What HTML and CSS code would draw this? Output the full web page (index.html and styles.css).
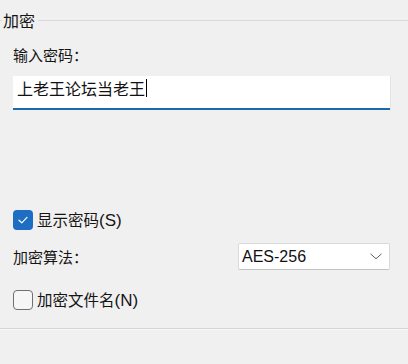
FILE: index.html
```html
<!DOCTYPE html>
<html lang="zh-CN">
<head>
    <meta charset="UTF-8">
    <title>加密</title>
    <link rel="stylesheet" href="styles.css">
</head>
<body>
    <div class="group-head"><span>加密</span></div>

    <div class="group-body">
        <div class="field-label">输入密码：</div>
        <div class="text-input">上老王论坛当老王<span class="caret"></span></div>

        <div class="check-row show-pass">
            <span class="checkbox checked">
                <svg width="20" height="20" viewBox="0 0 20 20">
                    <polyline points="6,10.2 8.8,12.8 14,7.4" fill="none" stroke="#fff" stroke-width="1.2" stroke-linecap="round" stroke-linejoin="round"/>
                </svg>
            </span>
            <span class="check-text">显示密码<span class="latin">(S)</span></span>
        </div>

        <div class="algo-row">
            <span>加密算法：</span>
            <div class="combo">
                <span class="combo-value">AES-256</span>
                <svg class="chevron" width="12" height="7" viewBox="0 0 12 7">
                    <polyline points="0.5,0.8 6,5.8 11.5,0.8" fill="none" stroke="#5c5c5c" stroke-width="1"/>
                </svg>
            </div>
        </div>

        <div class="check-row encrypt-name">
            <span class="checkbox"></span>
            <span class="check-text">加密文件名<span class="latin">(N)</span></span>
        </div>
    </div>

    <div class="bottom-line"></div>
</body>
</html>
```

FILE: styles.css
```css
body {
    margin: 0;
    background-color: #f0f0f0;
    font-family: "Noto Sans CJK SC", "Noto Sans", sans-serif;
    font-size: 15px;
    line-height: 20px;
    color: #151515;
}
.group-head {
    display: flex;
    align-items: center;
    padding-top: 10px;
    height: 20px;
}
.group-head::before,
.group-head::after {
    content: "";
    border-top: 1px solid #d9d9d9;
}
.group-head::before {
    width: 2px;
    margin-right: 1px;
}
.group-head::after {
    flex: 1;
    margin-left: 3px;
}
.group-head span {
    font-size: 16px;
}
.group-body {
    padding: 0 18px 0 13px;
}
.field-label {
    margin-top: 15px;
}
.text-input {
    margin-top: 11px;
    background: #fff;
    height: 20px;
    padding: 2px 4px 10px 4px;
    font-size: 16px;
    color: #111;
    border-bottom: 2px solid #1c68ad;
    box-shadow: 1px 0 0 #e4e4e4;
    display: flex;
    align-items: center;
}
.caret {
    display: inline-block;
    width: 1px;
    height: 18px;
    background: #000;
    margin-left: 1px;
}
.check-row {
    display: flex;
    align-items: center;
    height: 20px;
}
.check-text {
    font-size: 15.5px;
}
.show-pass {
    margin-top: 100px;
}
.encrypt-name {
    margin-top: 20px;
}
.checkbox {
    box-sizing: border-box;
    width: 20px;
    height: 20px;
    border: 1px solid #707070;
    border-radius: 4px;
    background: #f6f6f6;
    margin-right: 4px;
}
.checkbox.checked {
    border: none;
    background: #1d6ec3;
}
.checkbox svg {
    display: block;
}
.latin {
    font-family: "Liberation Sans", Arial, sans-serif;
    font-size: 17px;
}
.algo-row {
    margin-top: 13px;
    display: flex;
    align-items: center;
    justify-content: space-between;
    height: 27px;
}
.combo {
    box-sizing: border-box;
    width: 152px;
    height: 27px;
    background: #fff;
    border: 1px solid #dadada;
    border-bottom-color: #c4c4c4;
    border-radius: 2px;
    display: flex;
    align-items: center;
    justify-content: space-between;
    padding: 0 7px 0 3px;
}
.combo-value {
    font-family: "Liberation Sans", Arial, sans-serif;
    font-size: 16px;
    color: #111;
}
.chevron {
    display: block;
}
.bottom-line {
    margin-top: 18px;
    border-top: 1px solid #d6d6d6;
    border-bottom: 1px solid #f8f8f8;
}
```
